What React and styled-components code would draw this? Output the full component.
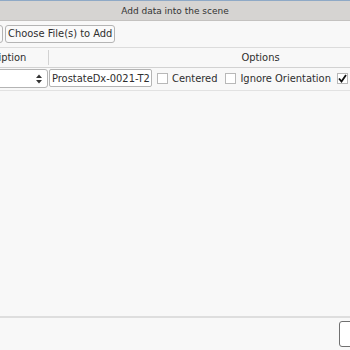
import React from 'react';
import styled, { createGlobalStyle } from 'styled-components';

const Global = createGlobalStyle`
  html, body { margin: 0; padding: 0; background: #f8f8f8; }
  body { font-family: "DejaVu Sans Condensed", "DejaVu Sans", sans-serif; font-size: 11px; color: #2e2e2e; }
`;

const Window = styled.div`
  width: 350px;
  height: 350px;
  display: flex;
  flex-direction: column;
  overflow: hidden;
  background: #f8f8f8;
  border-top: 1px solid #8fa9c6;
`;

const TitleBar = styled.div`
  height: 19px;
  display: flex;
  align-items: center;
  justify-content: center;
  background: #d6d4d2;
  font-family: "DejaVu Sans", sans-serif;
  font-size: 9px;
  color: #333;
  border-bottom: 1px solid #c4c2c0;
`;

const Toolbar = styled.div`
  display: flex;
  align-items: center;
  gap: 2px;
  padding: 4px 0 4px 0;
  margin-left: -6px;
`;

const Button = styled.button`
  height: 18px;
  padding: 0 2px;
  font-family: inherit;
  font-size: 11px;
  line-height: 14px;
  color: #2e2e2e;
  background: #fafafa;
  border: 1px solid #b4b4b4;
  border-radius: 3px;
  white-space: nowrap;
`;

const Table = styled.div`
  border-top: 1px solid #dcdcdc;
  margin-left: -34px;
  width: 506px;
`;

const Header = styled.div`
  display: grid;
  grid-template-columns: 83px 1fr;
  height: 19px;
  border-bottom: 1px solid #d2d2d2;
`;

const HeadCell = styled.div`
  display: flex;
  align-items: center;
  justify-content: ${p => (p.center ? 'center' : 'flex-start')};
  padding-left: ${p => (p.center ? '0' : '4px')};
  border-right: ${p => (p.last ? 'none' : '1px solid #d2d2d2')};
  margin: 2px 0;
`;

const Row = styled.div`
  display: grid;
  grid-template-columns: 83px 1fr;
  height: 23px;
  align-items: start;
  padding-top: 1px;
  box-sizing: border-box;
  border-bottom: 1px solid #e2e2e2;
`;

const Combo = styled.div`
  height: 19px;
  display: flex;
  align-items: center;
  justify-content: flex-end;
  background: #fff;
  border: 1px solid #b4b4b4;
  border-radius: 3px;
  box-sizing: border-box;
  padding-right: 5px;
  margin-right: 1px;
`;

const Options = styled.div`
  display: flex;
  align-items: center;
  height: 18px;
`;

const Field = styled.div`
  width: 103px;
  height: 18px;
  box-sizing: border-box;
  display: flex;
  align-items: center;
  padding: 0 2px;
  background: #fff;
  border: 1px solid #b4b4b4;
  border-radius: 2px;
  white-space: nowrap;
  overflow: hidden;
`;

const Check = styled.span`
  width: 9px;
  height: 9px;
  margin-left: ${p => p.gap}px;
  border: 1px solid #b8b8b8;
  background: #fff;
  display: inline-flex;
  align-items: center;
  justify-content: center;
  flex: none;
`;

const Label = styled.span`
  white-space: nowrap;
  margin-left: 4px;
`;

const Spacer = styled.div`
  flex: 1;
`;

const Footer = styled.div`
  height: 35px;
  border-top: 2px solid #dedede;
  display: flex;
  justify-content: flex-end;
  padding-top: 3px;
  box-sizing: border-box;
`;

const FooterButton = styled.div`
  width: 30px;
  height: 24px;
  margin-right: -21px;
  border: 1px solid #707070;
  border-radius: 3px;
  background: #fff;
`;

const Arrows = () => (
  <svg width="6" height="10" viewBox="0 0 6 10">
    <path d="M3 0.5 L6 4 L0 4 Z" fill="#333" />
    <path d="M3 9.5 L6 6 L0 6 Z" fill="#333" />
  </svg>
);

const Tick = () => (
  <svg width="9" height="9" viewBox="0 0 9 9">
    <path d="M1 4.5 L3.5 7.5 L8 1" stroke="#111" strokeWidth="1.8" fill="none" />
  </svg>
);

export default function App() {
  return (
    <Window>
      <Global />
      <TitleBar>Add data into the scene</TitleBar>
      <Toolbar>
        <Button style={{ width: 9 }} />
        <Button>Choose File(s) to Add</Button>
      </Toolbar>
      <Table>
        <Header>
          <HeadCell>Description</HeadCell>
          <HeadCell center last>Options</HeadCell>
        </Header>
        <Row>
          <Combo><Arrows /></Combo>
          <Options>
            <Field>ProstateDx-0021-T2</Field>
            <Check gap={5} />
            <Label>Centered</Label>
            <Check gap={8} />
            <Label>Ignore Orientation</Label>
            <Check gap={6}><Tick /></Check>
          </Options>
        </Row>
      </Table>
      <Spacer />
      <Footer>
        <FooterButton />
      </Footer>
    </Window>
  );
}
